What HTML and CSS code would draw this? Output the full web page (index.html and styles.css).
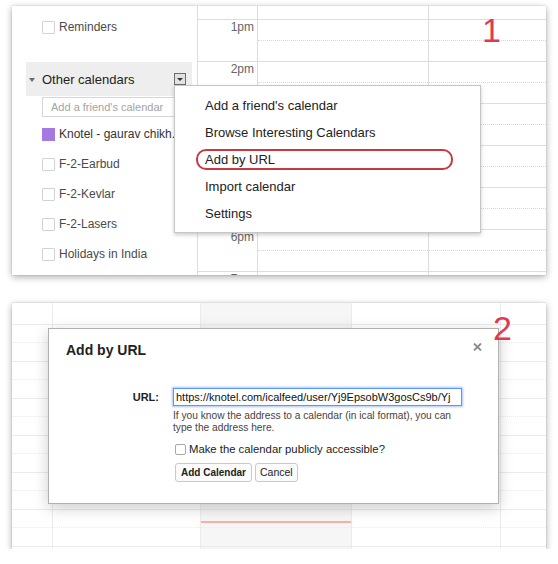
FILE: index.html
```html
<!DOCTYPE html>
<html>
<head>
<meta charset="utf-8">
<title>Add by URL</title>
<link rel="stylesheet" href="styles.css">
</head>
<body>
<div class="page">
  <section class="shot shot1">
    <aside class="side">
      <div class="cal-row"><span class="chk"></span><span class="cal-name">Reminders</span></div>
      <div class="group-head">
        <span class="caret"></span>
        <span class="group-title">Other calendars</span>
        <span class="drop-btn"><span class="drop-tri"></span></span>
      </div>
      <div class="friend-input">Add a friend's calendar</div>
      <div class="cal-row"><span class="swatch"></span><span class="cal-name dark">Knotel - gaurav chikh.</span></div>
      <div class="cal-row"><span class="chk"></span><span class="cal-name">F-2-Earbud</span></div>
      <div class="cal-row"><span class="chk"></span><span class="cal-name">F-2-Kevlar</span></div>
      <div class="cal-row"><span class="chk"></span><span class="cal-name">F-2-Lasers</span></div>
      <div class="cal-row"><span class="chk"></span><span class="cal-name">Holidays in India</span></div>
    </aside>
    <div class="timecol">
      <div class="slot-top"></div>
      <div class="hour">1pm</div>
      <div class="hour">2pm</div>
      <div class="hour"></div>
      <div class="hour"></div>
      <div class="hour"></div>
      <div class="hour">6pm</div>
      <div class="hour">7pm</div>
    </div>
    <div class="daycol wide">
      <div class="slot-top"></div>
      <div class="hour"><div class="half"></div></div>
      <div class="hour"><div class="half"></div></div>
      <div class="hour"><div class="half"></div></div>
      <div class="hour"><div class="half"></div></div>
      <div class="hour"><div class="half"></div></div>
      <div class="hour"><div class="half"></div></div>
      <div class="hour"><div class="half"></div></div>
    </div>
    <div class="daycol rest">
      <div class="slot-top"></div>
      <div class="hour"><div class="half"></div></div>
      <div class="hour"><div class="half"></div></div>
      <div class="hour"><div class="half"></div></div>
      <div class="hour"><div class="half"></div></div>
      <div class="hour"><div class="half"></div></div>
      <div class="hour"><div class="half"></div></div>
      <div class="hour"><div class="half"></div></div>
    </div>
    <div class="menu">
      <div class="menu-item">Add a friend's calendar</div>
      <div class="menu-item">Browse Interesting Calendars</div>
      <div class="menu-item">Add by URL<span class="url-ring"></span></div>
      <div class="menu-item">Import calendar</div>
      <div class="menu-item">Settings</div>
    </div>
    <div class="mark mark1">1</div>
  </section>

  <section class="shot shot2">
    <div class="bgcol c0">
      <div class="bg-top"></div>
      <div class="bg-hour"><div class="bg-half"></div></div>
      <div class="bg-hour"><div class="bg-half"></div></div>
      <div class="bg-hour"><div class="bg-half"></div></div>
      <div class="bg-hour"><div class="bg-half"></div></div>
      <div class="bg-hour"><div class="bg-half"></div></div>
      <div class="bg-hour"><div class="bg-half"></div></div>
      <div class="bg-hour"><div class="bg-half"></div></div>
    </div>
    <div class="bgcol c1">
      <div class="bg-top"></div>
      <div class="bg-hour"><div class="bg-half"></div></div>
      <div class="bg-hour"><div class="bg-half"></div></div>
      <div class="bg-hour"><div class="bg-half"></div></div>
      <div class="bg-hour"><div class="bg-half"></div></div>
      <div class="bg-hour"><div class="bg-half"></div></div>
      <div class="bg-hour"><div class="bg-half"></div></div>
      <div class="bg-hour"><div class="bg-half"></div></div>
    </div>
    <div class="bgcol c2 today">
      <div class="bg-top"></div>
      <div class="bg-hour"><div class="bg-half"></div></div>
      <div class="bg-hour"><div class="bg-half"></div></div>
      <div class="bg-hour"><div class="bg-half"></div></div>
      <div class="bg-hour"><div class="bg-half"></div></div>
      <div class="bg-hour"><div class="bg-half"></div></div>
      <div class="bg-hour"><div class="bg-half"></div></div>
      <div class="bg-hour"><div class="bg-half"></div></div>
      <div class="now-line"></div>
    </div>
    <div class="bgcol c3">
      <div class="bg-top"></div>
      <div class="bg-hour"><div class="bg-half"></div></div>
      <div class="bg-hour"><div class="bg-half"></div></div>
      <div class="bg-hour"><div class="bg-half"></div></div>
      <div class="bg-hour"><div class="bg-half"></div></div>
      <div class="bg-hour"><div class="bg-half"></div></div>
      <div class="bg-hour"><div class="bg-half"></div></div>
      <div class="bg-hour"><div class="bg-half"></div></div>
    </div>
    <div class="bgcol c4">
      <div class="bg-top"></div>
      <div class="bg-hour"><div class="bg-half"></div></div>
      <div class="bg-hour"><div class="bg-half"></div></div>
      <div class="bg-hour"><div class="bg-half"></div></div>
      <div class="bg-hour"><div class="bg-half"></div></div>
      <div class="bg-hour"><div class="bg-half"></div></div>
      <div class="bg-hour"><div class="bg-half"></div></div>
      <div class="bg-hour"><div class="bg-half"></div></div>
    </div>

    <div class="dialog">
      <div class="dlg-head">
        <span class="dlg-title">Add by URL</span>
        <svg class="close" width="9" height="8" viewBox="0 0 9 8"><path d="M1 0.5 L8 7.5 M8 0.5 L1 7.5" stroke="#8a8a8a" stroke-width="1.8" fill="none"/></svg>
      </div>
      <div class="dlg-form">
        <span class="url-label">URL:</span>
        <div class="url-input">https://knotel.com/icalfeed/user/Yj9EpsobW3gosCs9b/Yj</div>
        <p class="help">If you know the address to a calendar (in ical format), you can type the address here.</p>
        <label class="pub"><span class="box"></span>Make the calendar publicly accessible?</label>
        <div class="btns">
          <span class="btn primary">Add Calendar</span>
          <span class="btn">Cancel</span>
        </div>
      </div>
    </div>
    <div class="mark mark2">2</div>
  </section>
</div>
</body>
</html>
```

FILE: styles.css
```css
* { box-sizing: border-box; }

body {
  margin: 0;
  background: #fff;
  font-family: "Liberation Sans", Arial, sans-serif;
}

.page {
  display: flex;
  flex-direction: column;
  gap: 28px;
  padding: 6px 12px 0;
}

.shot {
  position: relative;
  overflow: hidden;
  background: #fff;
  box-shadow: 0 2px 7px rgba(0, 0, 0, 0.33), 0 0 1px rgba(0, 0, 0, 0.25);
}

/* ---------- panel 1 ---------- */
.shot1 {
  height: 269px;
  display: flex;
}

.side {
  width: 185px;
  flex: none;
  padding-top: 6px;
}

.cal-row {
  height: 30px;
  display: flex;
  align-items: center;
  padding-left: 30px;
  font-size: 12px;
  color: #4a4a4a;
  white-space: nowrap;
}

.cal-name.dark { color: #333; }

.chk {
  width: 13px;
  height: 13px;
  border: 1px solid #d2d2d2;
  border-radius: 1px;
  margin-right: 4px;
  flex: none;
}

.swatch {
  width: 13px;
  height: 13px;
  background: #a47ae2;
  margin-right: 4px;
  flex: none;
}

.group-head {
  margin: 20px 0 0 14px;
  width: 166px;
  height: 34px;
  background: #eeeeee;
  display: flex;
  align-items: center;
  padding: 0 6px 0 3px;
}

.caret {
  width: 0;
  height: 0;
  border-left: 3px solid transparent;
  border-right: 3px solid transparent;
  border-top: 4px solid #6a6a6a;
  margin-right: 7px;
  margin-top: 1px;
}

.group-title {
  flex: 1;
  font-size: 13px;
  color: #222;
}

.drop-btn {
  width: 12px;
  height: 12px;
  border: 1px solid #6d6d6d;
  background: #e2e2e2;
  display: flex;
  align-items: center;
  justify-content: center;
}

.drop-tri {
  width: 0;
  height: 0;
  border-left: 3px solid transparent;
  border-right: 3px solid transparent;
  border-top: 3px solid #333;
}

.friend-input {
  margin: 1px 0 2px 30px;
  width: 150px;
  height: 20px;
  border: 1px solid #d6d6d6;
  font-size: 11px;
  line-height: 18px;
  color: #a3a3a3;
  padding-left: 8px;
  white-space: nowrap;
}

.timecol {
  width: 60px;
  flex: none;
  border-left: 1px solid #dddddd;
}

.slot-top { height: 13px; }

.hour {
  height: 42px;
  border-top: 1px solid #dddddd;
}

.timecol .hour {
  text-align: right;
  padding-right: 3px;
  font-size: 12px;
  line-height: 14px;
  color: #666;
}

.daycol { border-left: 1px solid #dddddd; }
.daycol.wide { width: 171px; flex: none; }
.daycol.rest { flex: 1; }

.half {
  height: 21px;
  border-bottom: 1px dotted #d8d8d8;
}

.menu {
  position: absolute;
  left: 162px;
  top: 79px;
  width: 307px;
  height: 148px;
  background: #fff;
  border: 1px solid #c6c6c6;
  box-shadow: 0 2px 4px rgba(0, 0, 0, 0.2);
  padding-top: 6px;
  z-index: 2;
}

.menu-item {
  position: relative;
  height: 27px;
  line-height: 27px;
  padding-left: 30px;
  font-size: 13px;
  color: #222;
}

.url-ring {
  position: absolute;
  left: 21px;
  top: 3px;
  width: 257px;
  height: 21px;
  border: 2px solid #c9393f;
  border-radius: 10px;
}

.mark {
  position: absolute;
  font-size: 34px;
  line-height: 34px;
  color: #e03a50;
  z-index: 3;
}

.mark1 { left: 470px; top: 7px; }
.mark2 { left: 481px; top: 8px; }

/* ---------- panel 2 ---------- */
.shot2 {
  height: 246px;
  display: flex;
}

.bgcol {
  flex: none;
  border-left: 1px solid #ebebeb;
  position: relative;
}

.c0 { width: 40px; border-left: 0; }
.c1 { width: 148px; }
.c2 { width: 151px; }
.c3 { width: 149px; }
.c4 { flex: 1; }

.today { background: #f6f6f6; }

.bg-top { height: 21px; }

.bg-hour {
  height: 37px;
  border-top: 1px solid #ebebeb;
}

.bg-half {
  height: 18px;
  border-bottom: 1px dotted #ececec;
}

.now-line {
  position: absolute;
  left: 0;
  right: 0;
  top: 218px;
  height: 2px;
  background: #fbaea6;
}

.dialog {
  position: absolute;
  left: 36px;
  top: 25px;
  width: 451px;
  height: 176px;
  background: #fff;
  border: 1px solid #b0b0b0;
  box-shadow: 0 4px 14px rgba(0, 0, 0, 0.2);
  padding: 12px 17px 0;
  z-index: 2;
}

.dlg-head {
  display: flex;
  justify-content: space-between;
  align-items: flex-start;
  height: 18px;
}

.dlg-title {
  font-size: 14px;
  font-weight: bold;
  line-height: 18px;
  color: #222;
}

.close {
  margin-top: 2px;
  margin-right: -1px;
}

.dlg-form {
  display: grid;
  grid-template-columns: 93px 289px;
  column-gap: 14px;
  margin-top: 29px;
}

.url-label {
  font-size: 11px;
  font-weight: bold;
  color: #222;
  text-align: right;
  align-self: center;
}

.url-input {
  height: 18px;
  border: 1px solid #5b97f7;
  box-shadow: 0 0 2px 1px rgba(91, 151, 247, 0.55);
  font-size: 11px;
  line-height: 16px;
  padding-left: 2px;
  white-space: nowrap;
  overflow: hidden;
  color: #111;
}

.help {
  grid-column: 2;
  margin: 4px 0 0;
  font-size: 10.2px;
  line-height: 12px;
  color: #444;
}

.pub {
  grid-column: 2;
  display: flex;
  align-items: center;
  height: 14px;
  margin-top: 8px;
  font-size: 11.3px;
  color: #222;
}

.pub .box {
  width: 11px;
  height: 11px;
  border: 1px solid #a8a8a8;
  border-radius: 2px;
  margin: 0 3px 0 2px;
  flex: none;
}

.btns {
  grid-column: 2;
  display: flex;
  gap: 3px;
  margin-top: 7px;
  padding-left: 2px;
}

.btn {
  height: 19px;
  border: 1px solid #c9c9c9;
  border-radius: 3px;
  background: #fbfbfb;
  font-size: 10.5px;
  line-height: 17px;
  padding: 0 4px;
  color: #222;
}

.btn.primary {
  font-size: 10px;
  font-weight: bold;
  padding: 0 5px;
}
```
